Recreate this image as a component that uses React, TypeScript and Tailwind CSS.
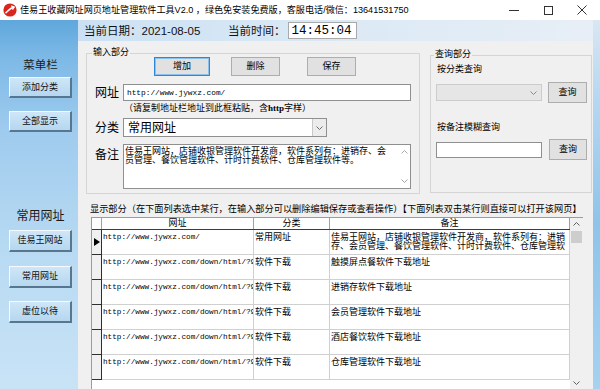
import React from "react";

const sans = "font-['Liberation_Sans','Noto_Sans_CJK_SC',sans-serif]";

function AppIcon() {
  return (
    <svg width="14" height="14" viewBox="0 0 14 14">
      <circle cx="7" cy="7" r="6.6" fill="#d9251d" />
      <path d="M3 9.6 C5 8.2 6.4 5.2 10.8 4.2" stroke="#fff" strokeWidth="1.7" fill="none" strokeLinecap="round" />
      <path d="M8.6 3.2 L11 4.1 L9.8 6.2" stroke="#fff" strokeWidth="1.3" fill="none" strokeLinecap="round" strokeLinejoin="round" />
    </svg>
  );
}

function Chevron({ up = false, color = "#6d6d6d" }: { up?: boolean; color?: string }) {
  return (
    <svg width="7" height="4" viewBox="0 0 7 4">
      <path d={up ? "M0.5 3.5 L3.5 0.5 L6.5 3.5" : "M0.5 0.5 L3.5 3.5 L6.5 0.5"} stroke={color} strokeWidth="1" fill="none" />
    </svg>
  );
}

const rows = [
  { url: "http://www.jywxz.com/", cat: "常用网址", note: ["佳易王网站，店铺收银管理软件开发商，软件系列有：进销", "存、会员管理、餐饮管理软件、计时计费软件、仓库管理软"] },
  { url: "http://www.jywxz.com/down/html/?9", cat: "软件下载", note: ["触摸屏点餐软件下载地址"] },
  { url: "http://www.jywxz.com/down/html/?9", cat: "软件下载", note: ["进销存软件下载地址"] },
  { url: "http://www.jywxz.com/down/html/?9", cat: "软件下载", note: ["会员管理软件下载地址"] },
  { url: "http://www.jywxz.com/down/html/?9", cat: "软件下载", note: ["酒店餐饮软件下载地址"] },
  { url: "http://www.jywxz.com/down/html/?9", cat: "软件下载", note: ["仓库管理软件下载地址"] },
];

const sideBtn =
  "w-[63px] flex items-center justify-center text-[9px] leading-[11px] text-[#111] bg-[linear-gradient(180deg,#cfe6f7,#b5d7f0)] border-t border-l border-r-2 border-b-2 border-t-[#f4faff] border-l-[#f4faff] border-r-[#58778f] border-b-[#58778f]";

const winBtn = "h-[19px] flex items-center justify-center bg-[#e1e1e1] border border-[#adadad] text-[9px] leading-[11px] text-black";

export default function App() {
  return (
    <div className={`w-[600px] h-[389px] overflow-hidden flex flex-col text-black ${sans}`}>
      {/* Title bar */}
      <div className="h-[20px] shrink-0 bg-white flex items-center">
        <div className="ml-[3px] flex items-center">
          <AppIcon />
        </div>
        <div className="ml-[3px] text-[9.1px] leading-[12px] text-black whitespace-nowrap">
          佳易王收藏网址网页地址管理软件工具V2.0 ，绿色免安装免费版，客服电话/微信：13641531750
        </div>
        <div className="ml-auto mr-[1px] flex h-full">
          <div className="w-[34px] h-full flex items-center justify-center">
            <div className="w-[10px] h-px bg-[#333]" />
          </div>
          <div className="w-[34px] h-full flex items-center justify-center">
            <div className="w-[9px] h-[9px] border border-[#333]" />
          </div>
          <div className="w-[34px] h-full flex items-center justify-center">
            <svg width="10" height="10" viewBox="0 0 10 10">
              <path d="M0.5 0.5 L9.5 9.5 M9.5 0.5 L0.5 9.5" stroke="#333" strokeWidth="1" />
            </svg>
          </div>
        </div>
      </div>

      {/* Body */}
      <div className="flex flex-1 min-h-0">
        {/* Sidebar */}
        <div className="w-[78px] shrink-0 flex flex-col pl-[9px] bg-[linear-gradient(180deg,#5fa7dc_0%,#7db9e6_10%,#9fcbee_30%,#b6d9f2_60%,#c9e3f6_100%)]">
          <div className="mt-[38px] w-[63px] text-center text-[11.5px] leading-[14px] text-[#1a1a1a]">菜单栏</div>
          <div className={`${sideBtn} h-[21px] mt-[5px]`}>添加分类</div>
          <div className={`${sideBtn} h-[21px] mt-[13px]`}>全部显示</div>
          <div className="mt-[77px] w-[63px] text-center text-[12px] leading-[14px] text-[#1a1a1a]">常用网址</div>
          <div className={`${sideBtn} h-[22px] mt-[7px]`}>佳易王网站</div>
          <div className={`${sideBtn} h-[22px] mt-[14px]`}>常用网址</div>
          <div className={`${sideBtn} h-[22px] mt-[13px]`}>虚位以待</div>
        </div>

        {/* Center column */}
        <div className="w-[515px] shrink-0 flex flex-col">
          {/* Date row */}
          <div className="h-[21px] shrink-0 flex items-center pl-[6px] bg-[linear-gradient(90deg,#cbe1f3,#dbe9f5_50%,#e7eef6)] text-[11.5px] leading-[14px] text-[#111]">
            <span className="w-[144px] whitespace-nowrap">当前日期：2021-08-05</span>
            <span className="whitespace-nowrap">当前时间：</span>
            <div className="ml-[2px] w-[69px] h-[17px] bg-white border border-[#a9a9a9] flex items-center pl-[3px] font-['Liberation_Mono',monospace] text-[12.5px] leading-[14px] text-black">
              14:45:04
            </div>
          </div>

          {/* Gray panel */}
          <div className="flex-1 bg-[#f0f0f0] flex flex-col">
            <div className="flex items-start mt-[12px] ml-[8px]">
              {/* Input group */}
              <div className="relative w-[334px] h-[141px] border border-[#d5d5d5]">
                <span className="absolute -top-[7px] left-[5px] px-[1px] bg-[#f0f0f0] text-[9px] leading-[11px]">输入部分</span>
                <div className="flex mt-[3px] ml-[67px]">
                  <div className="w-[56px] h-[19px] flex items-center justify-center bg-[#e1e1e1] border border-[#2f86d8] shadow-[inset_0_0_0_1px_#8cc0ee] text-[9px] leading-[11px]">增加</div>
                  <div className={`${winBtn} w-[49px] ml-[21px]`}>删除</div>
                  <div className={`${winBtn} w-[49px] ml-[27px]`}>保存</div>
                </div>
                <div className="flex items-center mt-[8px] ml-[8px]">
                  <span className="w-[28px] text-[12px] leading-[14px]">网址</span>
                  <div className="w-[288px] h-[17px] bg-white border border-[#8f8f8f] flex items-center pl-[3px] font-['Liberation_Mono',monospace] text-[7.8px] leading-[10px]">
                    http://www.jywxz.com/
                  </div>
                </div>
                <div className="mt-[2px] ml-[37px] text-[9px] leading-[11px] whitespace-nowrap">
                  （请复制地址栏地址到此框粘贴，含<span className="font-['Liberation_Serif',serif] font-bold">http</span>字样）
                </div>
                <div className="flex items-center mt-[4px] ml-[8px]">
                  <span className="w-[28px] text-[12px] leading-[14px]">分类</span>
                  <div className="w-[204px] h-[19px] bg-white border border-[#8f8f8f] flex items-center">
                    <span className="flex-1 pl-[4px] text-[12px] leading-[14px]">常用网址</span>
                    <div className="w-[14px] h-full bg-[#ececec] border-l border-[#c8c8c8] flex items-center justify-center">
                      <Chevron />
                    </div>
                  </div>
                </div>
                <div className="flex items-start mt-[7px] ml-[8px]">
                  <span className="w-[28px] mt-[4px] text-[12px] leading-[14px]">备注</span>
                  <div className="w-[288px] h-[45px] bg-white border border-[#8f8f8f] flex">
                    <div className="flex-1 pl-[1px] pt-[2px] text-[9px] leading-[8.5px] whitespace-nowrap overflow-hidden">
                      <div>佳易王网站，店铺收银管理软件开发商，软件系列有：进销存、会</div>
                      <div>员管理、餐饮管理软件、计时计费软件、仓库管理软件等。</div>
                    </div>
                    <div className="w-[11px] flex flex-col items-center justify-between py-[5px]">
                      <Chevron up color="#a8a8a8" />
                      <Chevron color="#a8a8a8" />
                    </div>
                  </div>
                </div>
              </div>

              {/* Query group */}
              <div className="relative ml-[10px] mt-[2px] w-[162px] h-[138px] border border-[#d5d5d5]">
                <span className="absolute -top-[7px] left-[3px] px-[1px] bg-[#f0f0f0] text-[9px] leading-[11px]">查询部分</span>
                <div className="mt-[8px] ml-[6px] text-[9px] leading-[11px]">按分类查询</div>
                <div className="flex items-center mt-[7px] ml-[5px]">
                  <div className="w-[106px] h-[17px] bg-[#e6e6e6] border border-[#cccccc] flex items-center justify-end pr-[4px]">
                    <Chevron color="#8a8a8a" />
                  </div>
                  <div className={`${winBtn} w-[39px] h-[21px] ml-[6px]`}>查询</div>
                </div>
                <div className="mt-[19px] ml-[6px] text-[9px] leading-[11px]">按备注模糊查询</div>
                <div className="flex items-center mt-[6px] ml-[5px]">
                  <div className="w-[106px] h-[16px] bg-white border border-[#8f8f8f]" />
                  <div className={`${winBtn} w-[38px] h-[21px] ml-[7px]`}>查询</div>
                </div>
              </div>
            </div>

            {/* Display label */}
            <div className="mt-[10px] ml-[12px] text-[9.2px] leading-[11px] whitespace-nowrap">
              显示部分（在下面列表选中某行，在输入部分可以删除编辑保存或查看操作）【下面列表双击某行则直接可以打开该网页】
            </div>

            {/* Table */}
            <div className="mt-[2px] ml-[13px] w-[492px] flex-1 flex border-l border-t border-[#9c9c9c] bg-white">
              <div className="w-[478px] flex flex-col">
                {/* header */}
                <div className="h-[12px] flex border-b border-[#3c3c3c] text-[9px] leading-[11px]">
                  <div className="w-[10px] border-r border-[#a0a0a0]" />
                  <div className="w-[152px] border-r border-[#a0a0a0] text-center">网址</div>
                  <div className="w-[76px] border-r border-[#a0a0a0] text-center">分类</div>
                  <div className="w-[240px] border-r border-[#a0a0a0] text-center">备注</div>
                </div>
                {rows.map((r, i) => (
                  <div key={i} className="h-[25px] flex">
                    <div className="w-[10px] bg-[#f0f0f0] border-r border-b border-[#2e2e2e] flex items-center justify-center">
                      {i === 0 && (
                        <svg width="6" height="8" viewBox="0 0 6 8">
                          <path d="M0 0 L6 4 L0 8 Z" fill="#000" />
                        </svg>
                      )}
                    </div>
                    <div className="w-[152px] border-r border-b border-[#d0d0d0] pl-[1px] pt-[3px] overflow-hidden whitespace-nowrap font-['Liberation_Mono',monospace] text-[7.7px] leading-[9px]">
                      {r.url}
                    </div>
                    <div className="w-[76px] border-r border-b border-[#d0d0d0] pl-[1px] pt-[3px] text-[9px] leading-[9px] whitespace-nowrap overflow-hidden">
                      {r.cat}
                    </div>
                    <div className="w-[240px] border-r border-b border-[#d0d0d0] pl-[1px] pt-[3px] text-[9px] leading-[9px] whitespace-nowrap overflow-hidden">
                      {r.note.map((l, j) => (
                        <div key={j}>{l}</div>
                      ))}
                    </div>
                  </div>
                ))}
              </div>
              {/* scrollbar */}
              <div className="w-[13px] bg-[#f0f0f0] flex flex-col items-center">
                <div className="h-[12px] flex items-center justify-center">
                  <Chevron up color="#606060" />
                </div>
                <div className="mt-[1px] w-[11px] h-[12px] bg-[#cdcdcd]" />
                <div className="mt-auto mb-[2px] h-[8px] flex items-center">
                  <Chevron color="#606060" />
                </div>
              </div>
            </div>
          </div>
        </div>

        {/* right strip */}
        <div className="flex-1 bg-[linear-gradient(180deg,#d8e7f3_0%,#b8d8f1_20%,#8ec4eb_55%,#a6d1f0_100%)]" />
      </div>
    </div>
  );
}
